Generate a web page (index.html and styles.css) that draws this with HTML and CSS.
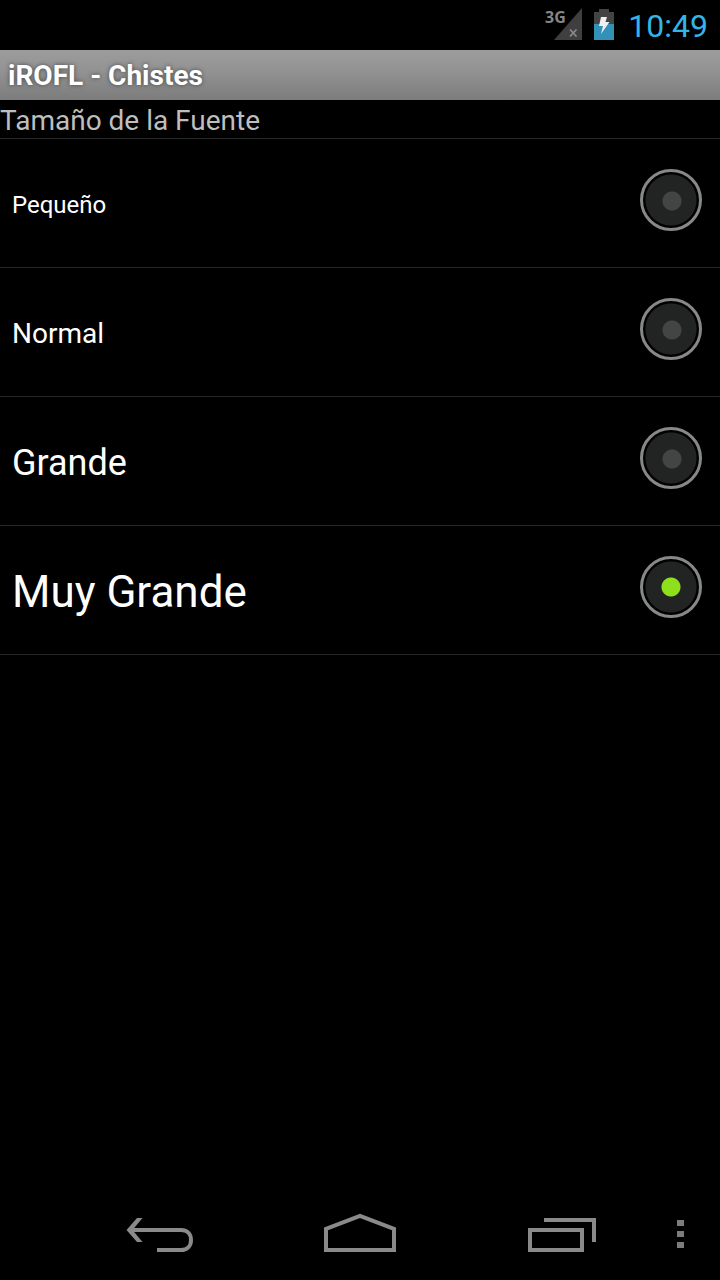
FILE: index.html
```html
<!DOCTYPE html>
<html lang="es">
<head>
<meta charset="utf-8">
<meta name="viewport" content="width=device-width, initial-scale=1">
<title>iROFL - Chistes</title>
<link rel="stylesheet" href="styles.css">
</head>
<body>
<div class="screen">
  <div class="status-bar">
    <svg class="signal" width="38" height="50" viewBox="0 0 38 50" role="img" aria-label="3G">
      <path d="M10 40 L38 8 V40Z" fill="#3f3f3f"/>
      <path d="M26 29.500l6.500 7M32.500 29.500l-6.500 7" stroke="#8a8a8a" stroke-width="1.800"/>
      <text class="signal-text" x="1" y="23">3G</text>
    </svg>
    <svg class="battery" width="20" height="50" viewBox="0 0 20 50" aria-hidden="true">
      <path d="M5 9H15V12H20V24H0V12H5Z" fill="#434343"/>
      <path d="M0 24H20V40H0Z" fill="#3391b8"/>
      <path d="M7 17H13L11.500 22H15.500L7 34L9 26H5Z" fill="#f0f0f0"/>
    </svg>
    <time class="clock">10:49</time>
  </div>
  <header class="title-bar"><h1 class="title">iROFL - Chistes</h1></header>
  <main class="content">
    <h2 class="section-title" id="size-label">Tamaño de la Fuente</h2>
    <div class="options" role="radiogroup" aria-labelledby="size-label">
      <label class="option option-small"><span>Pequeño</span><input class="radio" type="radio" name="size"></label>
      <label class="option option-normal"><span>Normal</span><input class="radio" type="radio" name="size"></label>
      <label class="option option-large"><span>Grande</span><input class="radio" type="radio" name="size"></label>
      <label class="option option-huge"><span>Muy Grande</span><input class="radio" type="radio" name="size" checked></label>
    </div>
  </main>
  <nav class="nav-bar">
    <div class="nav-main">
      <button class="nav-button" type="button" aria-label="Atrás">
        <svg width="160" height="96" viewBox="0 0 160 96" fill="none" stroke="#8a8a8a" stroke-width="4">
          <path d="M50 46H101C107 46 111 50 111 56S107 66 101 66H77"/>
          <path d="M46.500 46L57 34H62.500L52.500 46L62.500 58H57Z" fill="#8a8a8a" stroke="none"/>
        </svg>
      </button>
      <button class="nav-button" type="button" aria-label="Inicio">
        <svg width="160" height="96" viewBox="0 0 160 96" fill="none" stroke="#8a8a8a" stroke-width="4">
          <path d="M46 66V45L80 32L114 45V66Z"/>
        </svg>
      </button>
      <button class="nav-button" type="button" aria-label="Recientes">
        <svg width="160" height="96" viewBox="0 0 160 96" fill="none" stroke="#8a8a8a" stroke-width="4">
          <path d="M50 46H102V66H50Z"/>
          <path d="M64 36H114V58"/>
        </svg>
      </button>
    </div>
    <button class="nav-button" type="button" aria-label="Menú">
      <svg width="80" height="96" viewBox="0 0 80 96" fill="#7c7c7c">
        <path d="M37 36h7v6h-7zM37 47h7v6h-7zM37 58h7v6h-7z"/>
      </svg>
    </button>
  </nav>
</div>
</body>
</html>
```
FILE: styles.css
```css
* {
  box-sizing: border-box;
}

body {
  margin: 0;
  background: #000;
  color: #fff;
  font-family: Roboto, "Liberation Sans", sans-serif;
}

.screen {
  display: flex;
  flex-direction: column;
  min-height: 100vh;
}

.status-bar {
  display: flex;
  justify-content: flex-end;
  height: 50px;
  padding-right: 12px;
}

.signal {
  margin-right: 12px;
}

.signal-text {
  font-family: "Open Sans", "Liberation Sans", sans-serif;
  font-size: 16px;
  font-weight: 700;
  fill: #858585;
}

.battery {
  margin-right: 14px;
}

.clock {
  color: #33b5e5;
  font-size: 32px;
  line-height: 52px;
}

.title-bar {
  height: 50px;
  padding: 0 8px;
  background: linear-gradient(#9c9c9c, #929392 40%, #7c7c7c);
}

.title {
  margin: 0;
  font-size: 28px;
  font-weight: 700;
  line-height: 52px;
  text-shadow: 0 0 4px #444;
}

.content {
  flex: 1;
}

.section-title {
  margin: 0;
  padding-top: 4px;
  border-bottom: 1px solid #262626;
  color: #bebebe;
  font-size: 28px;
  font-weight: 400;
  line-height: 34px;
}

.option {
  display: flex;
  align-items: center;
  justify-content: space-between;
  min-height: 129px;
  padding: 3px 18px 0 12px;
  border-bottom: 1px solid #262626;
}

.option-small {
  font-size: 24px;
}

.option-normal {
  font-size: 28px;
}

.option-large {
  font-size: 36px;
}

.option-huge {
  font-size: 44px;
}

.radio {
  appearance: none;
  flex: none;
  width: 62px;
  height: 62px;
  margin: 0 0 9px;
  border: 3px solid #888;
  border-radius: 50%;
  background:
    radial-gradient(circle at 29px 29px, #444 9px, transparent 10px),
    radial-gradient(circle, #222423 25px, #000 26px);
}

.radio:checked {
  background:
    radial-gradient(circle at 28px 28px, #8ee01c 9px, transparent 10px),
    radial-gradient(circle, #222423 25px, #000 26px);
}

.nav-bar {
  display: flex;
  padding-left: 80px;
}

.nav-main {
  display: flex;
  flex: 1;
  justify-content: space-between;
}

.nav-button {
  padding: 0;
  border: 0;
  background: none;
}

.nav-button svg {
  display: block;
}
```
